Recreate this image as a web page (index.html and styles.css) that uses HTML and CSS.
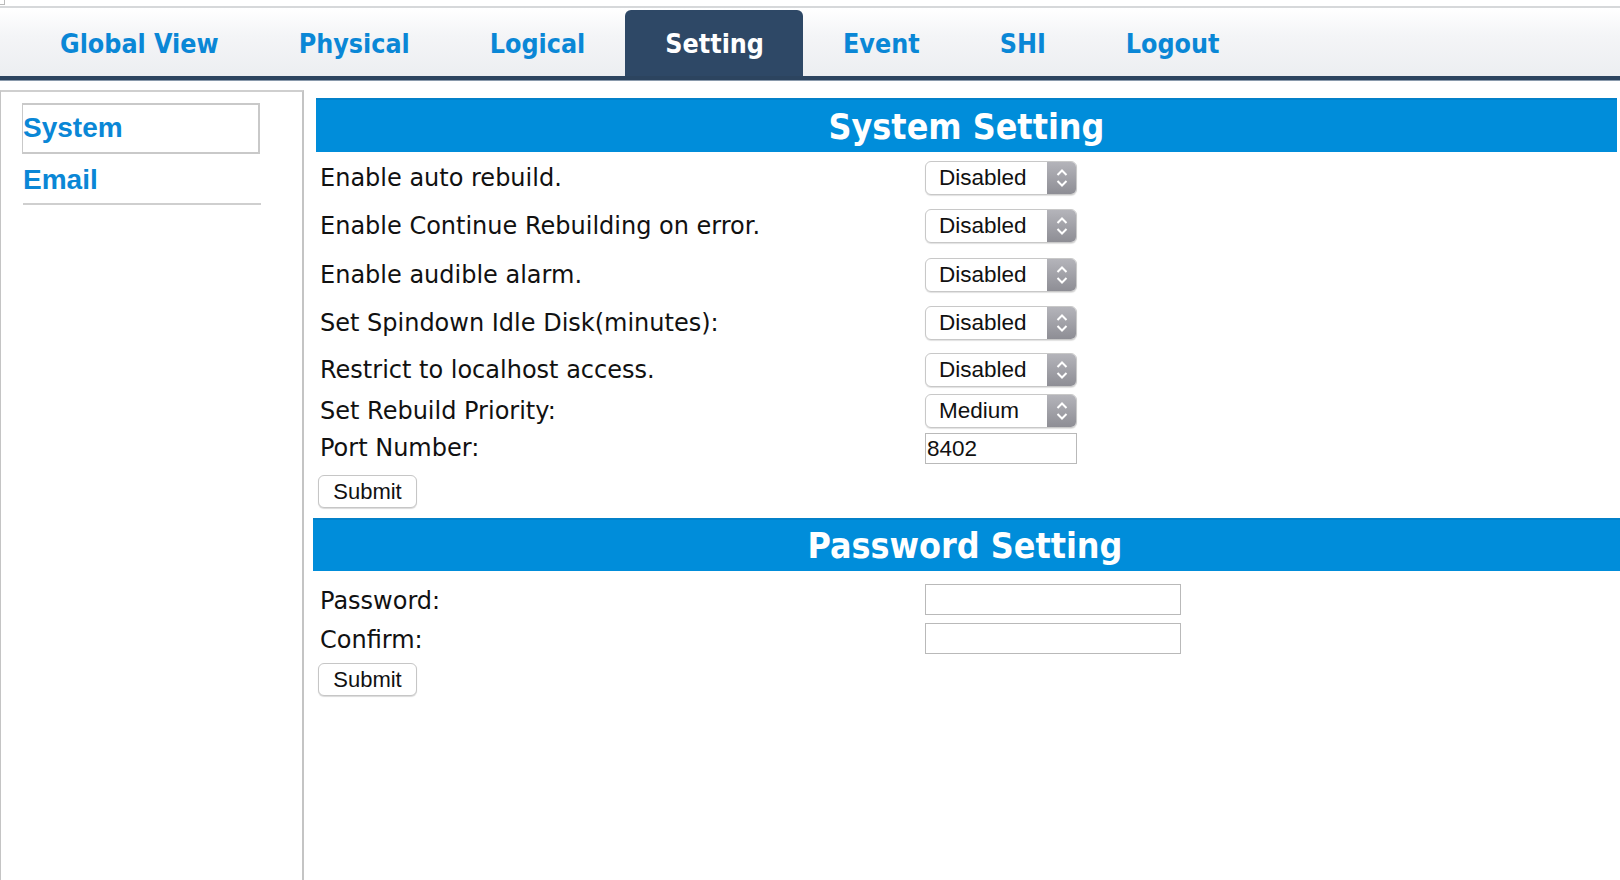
FILE: index.html
```html
<!DOCTYPE html>
<html>
<head>
<meta charset="utf-8">
<title>Setting</title>
<link rel="stylesheet" href="styles.css">
</head>
<body>
<div class="corner"></div>
<nav class="nav">
  <a class="tab">Global View</a>
  <a class="tab">Physical</a>
  <a class="tab">Logical</a>
  <a class="tab active">Setting</a>
  <a class="tab">Event</a>
  <a class="tab">SHI</a>
  <a class="tab">Logout</a>
</nav>
<div class="page">
  <aside class="side">
    <div class="side-item selected">System</div>
    <div class="side-item underline">Email</div>
  </aside>
  <main class="main">
    <h2 class="head head-sys">System Setting</h2>
    <div class="form">
      <div class="row r1"><span class="lbl">Enable auto rebuild.</span><div class="sel"><span class="val">Disabled</span><span class="arr"><svg width="14" height="22" viewBox="0 0 14 22"><path d="M2.5 8 L7 3.5 L11.5 8 M2.5 14 L7 18.5 L11.5 14" fill="none" stroke="#fff" stroke-width="2"/></svg></span></div></div>
      <div class="row r2"><span class="lbl">Enable Continue Rebuilding on error.</span><div class="sel"><span class="val">Disabled</span><span class="arr"><svg width="14" height="22" viewBox="0 0 14 22"><path d="M2.5 8 L7 3.5 L11.5 8 M2.5 14 L7 18.5 L11.5 14" fill="none" stroke="#fff" stroke-width="2"/></svg></span></div></div>
      <div class="row r3"><span class="lbl">Enable audible alarm.</span><div class="sel"><span class="val">Disabled</span><span class="arr"><svg width="14" height="22" viewBox="0 0 14 22"><path d="M2.5 8 L7 3.5 L11.5 8 M2.5 14 L7 18.5 L11.5 14" fill="none" stroke="#fff" stroke-width="2"/></svg></span></div></div>
      <div class="row r4"><span class="lbl">Set Spindown Idle Disk(minutes):</span><div class="sel"><span class="val">Disabled</span><span class="arr"><svg width="14" height="22" viewBox="0 0 14 22"><path d="M2.5 8 L7 3.5 L11.5 8 M2.5 14 L7 18.5 L11.5 14" fill="none" stroke="#fff" stroke-width="2"/></svg></span></div></div>
      <div class="row r5"><span class="lbl">Restrict to localhost access.</span><div class="sel"><span class="val">Disabled</span><span class="arr"><svg width="14" height="22" viewBox="0 0 14 22"><path d="M2.5 8 L7 3.5 L11.5 8 M2.5 14 L7 18.5 L11.5 14" fill="none" stroke="#fff" stroke-width="2"/></svg></span></div></div>
      <div class="row r6"><span class="lbl">Set Rebuild Priority:</span><div class="sel"><span class="val">Medium</span><span class="arr"><svg width="14" height="22" viewBox="0 0 14 22"><path d="M2.5 8 L7 3.5 L11.5 8 M2.5 14 L7 18.5 L11.5 14" fill="none" stroke="#fff" stroke-width="2"/></svg></span></div></div>
      <div class="row r7"><span class="lbl">Port Number:</span><div class="inp port">8402</div></div>
    </div>
    <button class="btn btn-sys">Submit</button>
    <h2 class="head head-pw">Password Setting</h2>
    <div class="form">
      <div class="row p1"><span class="lbl">Password:</span><div class="inp pw"></div></div>
      <div class="row p2"><span class="lbl">Confirm:</span><div class="inp pw"></div></div>
    </div>
    <button class="btn btn-pw">Submit</button>
  </main>
</div>
</body>
</html>
```
FILE: styles.css
```css
html, body {
  margin: 0;
  padding: 0;
  background: #fff;
  height: 100%;
}
body {
  font-family: "DejaVu Sans", sans-serif;
  color: #111;
  overflow: hidden;
  position: relative;
}
.corner {
  position: absolute;
  left: 0;
  top: 0;
  width: 4px;
  height: 4px;
  border: 1px solid #bbb;
  border-top: none;
  border-left: none;
}
.nav {
  margin-top: 6px;
  border-top: 2px solid #d6d8da;
  height: 68px;
  background: linear-gradient(#ffffff, #f4f5f7 40%, #eceef1);
  border-bottom: 4px solid #2c445f;
  box-shadow: 0 1px 0 #8a9aac;
  display: flex;
  align-items: flex-end;
  padding-left: 20px;
}
.tab {
  font-family: "DejaVu Sans Condensed", "DejaVu Sans", sans-serif;
  font-weight: bold;
  font-size: 26.6px;
  color: #0a87d6;
  padding: 2px 40px 0;
  height: 66px;
  line-height: 64px;
  box-sizing: border-box;
}
.tab.active {
  background: #2e4866;
  color: #fff;
  border-radius: 6px 6px 0 0;
  padding: 2px 39px 0 40px;
}
.page {
  display: flex;
  margin-top: 10px;
  height: 800px;
}
.side {
  border-left: 1px solid #c4c4c4;
  border-top: 2px solid #cfcfcf;
  border-right: 2px solid #c4c4c4;
  box-sizing: border-box;
  padding: 11px 0 0 22px;
  flex: none;
  width: 304px;
}
.side-item {
  font-family: "Liberation Sans", Arial, sans-serif;
  font-weight: bold;
  font-size: 28px;
  color: #0a87d6;
  width: 238px;
  box-sizing: border-box;
}
.side-item.selected {
  border: 2px solid #c9c9c9;
  border-left-width: 1px;
  height: 51px;
  line-height: 46px;
  margin-left: -1px;
}
.side-item.underline {
  height: 51px;
  line-height: 52px;
  border-bottom: 2px solid #cfcfcf;
}
.main {
  flex: 1;
  padding-left: 12px;
  padding-top: 8px;
}
.head {
  margin: 0;
  background: #008dda;
  border-top: 2px solid #0381c9;
  color: #fff;
  font-family: "DejaVu Sans Condensed", "DejaVu Sans", sans-serif;
  font-weight: bold;
  font-size: 35.5px;
  text-align: center;
  box-sizing: border-box;
}
.head-sys {
  height: 54px;
  line-height: 53px;
  margin-right: 3px;
}
.head-pw {
  margin-left: -3px;
  margin-top: 10px;
  height: 53px;
  line-height: 52px;
  padding-right: 3px;
}
.form {
  display: flex;
  flex-direction: column;
}
.row {
  display: grid;
  grid-template-columns: 609px auto;
  align-items: center;
}
.lbl {
  font-size: 24px;
  padding-left: 4px;
}
.r1 { height: 49px; margin-top: 1px; }
.r2 { height: 48px; }
.r3 { height: 49px; }
.r4 { height: 48px; }
.r5 { height: 46px; }
.r6 { height: 35px; }
.r7 { height: 40px; }
.p1 { height: 40px; margin-top: 8px; }
.p2 { height: 38px; }
.p1 .lbl, .p2 .lbl { padding-top: 3px; }
.sel {
  width: 152px;
  height: 34px;
  box-sizing: border-box;
  border: 1px solid #c8c8c8;
  border-radius: 6px;
  display: flex;
  background: #fff;
  box-shadow: 0 1px 1px rgba(0,0,0,0.12);
  overflow: hidden;
}
.val {
  flex: 1;
  font-family: "Liberation Sans", Arial, sans-serif;
  font-size: 22.5px;
  line-height: 32px;
  padding-left: 13px;
  color: #111;
}
.arr {
  width: 29px;
  background: linear-gradient(#b4b4ba, #8e8e95);
  display: flex;
  align-items: center;
  justify-content: center;
}
.inp {
  box-sizing: border-box;
  border: 1px solid #b9b9b9;
  height: 31px;
  font-family: "Liberation Sans", Arial, sans-serif;
  font-size: 22.5px;
  line-height: 29px;
  padding-left: 1px;
  background: #fff;
}
.port { width: 152px; }
.pw { width: 256px; }
.btn {
  display: block;
  font-family: "Liberation Sans", Arial, sans-serif;
  font-size: 22px;
  color: #111;
  background: #fff;
  border: 1px solid #c6c6c6;
  border-radius: 6px;
  width: 99px;
  height: 33px;
  margin-left: 2px;
  box-shadow: 0 1px 1px rgba(0,0,0,0.15);
  padding: 0;
}
.btn-sys { margin-top: 7px; }
.btn-pw { margin-top: 6px; }
```
